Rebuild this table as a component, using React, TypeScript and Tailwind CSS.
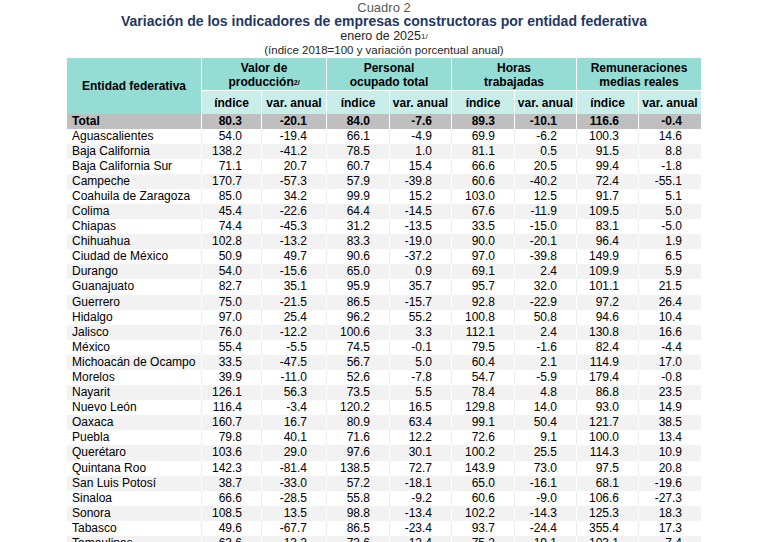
const rows: [string, ...string[]][] = [
  ["Aguascalientes", "54.0", "-19.4", "66.1", "-4.9", "69.9", "-6.2", "100.3", "14.6"],
  ["Baja California", "138.2", "-41.2", "78.5", "1.0", "81.1", "0.5", "91.5", "8.8"],
  ["Baja California Sur", "71.1", "20.7", "60.7", "15.4", "66.6", "20.5", "99.4", "-1.8"],
  ["Campeche", "170.7", "-57.3", "57.9", "-39.8", "60.6", "-40.2", "72.4", "-55.1"],
  ["Coahuila de Zaragoza", "85.0", "34.2", "99.9", "15.2", "103.0", "12.5", "91.7", "5.1"],
  ["Colima", "45.4", "-22.6", "64.4", "-14.5", "67.6", "-11.9", "109.5", "5.0"],
  ["Chiapas", "74.4", "-45.3", "31.2", "-13.5", "33.5", "-15.0", "83.1", "-5.0"],
  ["Chihuahua", "102.8", "-13.2", "83.3", "-19.0", "90.0", "-20.1", "96.4", "1.9"],
  ["Ciudad de México", "50.9", "49.7", "90.6", "-37.2", "97.0", "-39.8", "149.9", "6.5"],
  ["Durango", "54.0", "-15.6", "65.0", "0.9", "69.1", "2.4", "109.9", "5.9"],
  ["Guanajuato", "82.7", "35.1", "95.9", "35.7", "95.7", "32.0", "101.1", "21.5"],
  ["Guerrero", "75.0", "-21.5", "86.5", "-15.7", "92.8", "-22.9", "97.2", "26.4"],
  ["Hidalgo", "97.0", "25.4", "96.2", "55.2", "100.8", "50.8", "94.6", "10.4"],
  ["Jalisco", "76.0", "-12.2", "100.6", "3.3", "112.1", "2.4", "130.8", "16.6"],
  ["México", "55.4", "-5.5", "74.5", "-0.1", "79.5", "-1.6", "82.4", "-4.4"],
  ["Michoacán de Ocampo", "33.5", "-47.5", "56.7", "5.0", "60.4", "2.1", "114.9", "17.0"],
  ["Morelos", "39.9", "-11.0", "52.6", "-7.8", "54.7", "-5.9", "179.4", "-0.8"],
  ["Nayarit", "126.1", "56.3", "73.5", "5.5", "78.4", "4.8", "86.8", "23.5"],
  ["Nuevo León", "116.4", "-3.4", "120.2", "16.5", "129.8", "14.0", "93.0", "14.9"],
  ["Oaxaca", "160.7", "16.7", "80.9", "63.4", "99.1", "50.4", "121.7", "38.5"],
  ["Puebla", "79.8", "40.1", "71.6", "12.2", "72.6", "9.1", "100.0", "13.4"],
  ["Querétaro", "103.6", "29.0", "97.6", "30.1", "100.2", "25.5", "114.3", "10.9"],
  ["Quintana Roo", "142.3", "-81.4", "138.5", "72.7", "143.9", "73.0", "97.5", "20.8"],
  ["San Luis Potosí", "38.7", "-33.0", "57.2", "-18.1", "65.0", "-16.1", "68.1", "-19.6"],
  ["Sinaloa", "66.6", "-28.5", "55.8", "-9.2", "60.6", "-9.0", "106.6", "-27.3"],
  ["Sonora", "108.5", "13.5", "98.8", "-13.4", "102.2", "-14.3", "125.3", "18.3"],
  ["Tabasco", "49.6", "-67.7", "86.5", "-23.4", "93.7", "-24.4", "355.4", "17.3"],
  ["Tamaulipas", "63.6", "13.2", "73.6", "12.4", "75.2", "19.1", "103.1", "7.4"],
];

const total = ["80.3", "-20.1", "84.0", "-7.6", "89.3", "-10.1", "116.6", "-0.4"];

const groups = [
  { a: "Valor de", b: "producción", sup: "2/" },
  { a: "Personal", b: "ocupado total" },
  { a: "Horas", b: "trabajadas" },
  { a: "Remuneraciones", b: "medias reales" },
];

const cols = "grid grid-cols-[134px_60px_65px_63px_62px_63px_62px_62px_63px]";

export default function App() {
  return (
    <div className="w-[768px] h-[542px] overflow-hidden bg-white font-['Liberation_Sans',Arial,sans-serif] text-black">
      {/* encabezado del cuadro */}
      <div className="flex flex-col items-center">
        <p className="text-[13px] leading-[13px] pt-[1px] text-[#595959]">Cuadro 2</p>
        <h1 className="text-[14px] leading-[14px] font-bold text-[#1f3864]">
          Variación de los indicadores de empresas constructoras por entidad federativa
        </h1>
        <p className="text-[12.5px] leading-[15px] pt-[1px] text-[#262626]">
          enero de 2025
          <sup className="text-[8px] relative -top-[1px]">1/</sup>
        </p>
        <p className="text-[11.5px] leading-[13px] pb-[1px] text-[#262626]">
          (índice 2018=100 y variación porcentual anual)
        </p>
      </div>

      <div className="w-[634px] mx-auto">
        <div className={`${cols} grid-rows-[32px_24px] text-[12px] font-bold`}>
          <div className="row-span-2 bg-[#95dcd5] flex items-center justify-center">
            Entidad federativa
          </div>
          {groups.map((g) => (
            <div
              key={g.a}
              className="col-span-2 bg-[#95dcd5] border-l border-white flex flex-col items-center justify-center leading-[14px] pt-[1px]"
            >
              <span>{g.a}</span>
              <span>
                {g.b}
                {g.sup && <sup className="text-[7px] relative -top-[1px]">{g.sup}</sup>}
              </span>
            </div>
          ))}
          {groups.map((g) => (
            <div key={g.a + "-sub"} className="contents">
              <div className="bg-[#c9eeea] border-l border-t border-white flex items-center justify-center">
                índice
              </div>
              <div className="bg-[#c9eeea] border-l border-t border-white flex items-center justify-center">
                var. anual
              </div>
            </div>
          ))}
        </div>

        <div className={`${cols} h-[14.5px] bg-[#bfbfbf] text-[12px] leading-[14.5px] font-bold`}>
          <div className="pl-[5px]">Total</div>
          {total.map((v, i) => (
            <div key={i} className="border-l border-white text-right pr-[19px]">
              {v}
            </div>
          ))}
        </div>

        {rows.map(([name, ...vals], r) => (
          <div
            key={name}
            className={`${cols} h-[15.1px] text-[12px] leading-[15.1px] ${
              r % 2 === 1 ? "bg-[#f2f2f2]" : "bg-white"
            }`}
          >
            <div className="pl-[5px] whitespace-nowrap">{name}</div>
            {vals.map((v, i) => (
              <div
                key={i}
                className={`border-l text-right pr-[19px] ${
                  r % 2 === 1 ? "border-white" : "border-[#ececec]"
                }`}
              >
                {v}
              </div>
            ))}
          </div>
        ))}
      </div>
    </div>
  );
}
